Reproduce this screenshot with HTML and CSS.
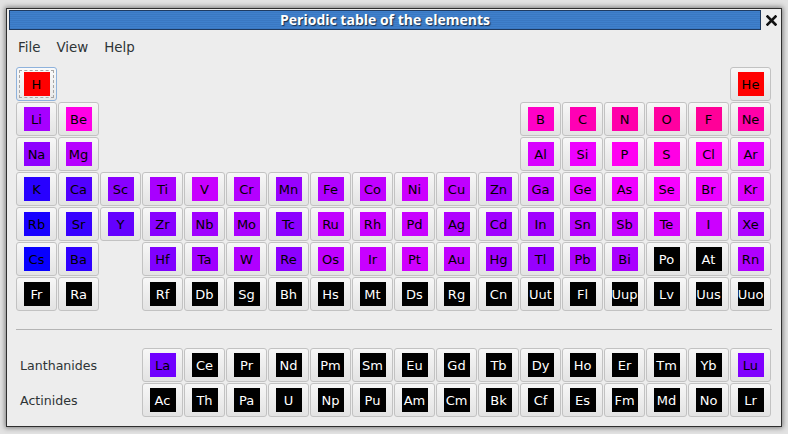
FILE: index.html
```html
<!DOCTYPE html>
<html>
<head>
<meta charset="utf-8">
<link rel="stylesheet" href="styles.css">
</head>
<body>
<div class="window">
  <div class="titlebar">
    <div class="title">Periodic table of the elements</div>
    <div class="close">
      <svg width="11" height="11" viewBox="0 0 11 11"><path d="M1.5 1.5 L9.5 9.5 M9.5 1.5 L1.5 9.5" stroke="#111" stroke-width="2.6" stroke-linecap="square"/></svg>
    </div>
  </div>
  <div class="menubar">
    <span class="menu">File</span>
    <span class="menu">View</span>
    <span class="menu">Help</span>
  </div>
  <div class="table">
    <div class="el focus"><span style="background:#ff0000">H</span></div>
    <div class="skip16"></div>
    <div class="el"><span style="background:#ff0000">He</span></div>

    <div class="el"><span style="background:#a600ff">Li</span></div>
    <div class="el"><span style="background:#ff00e6">Be</span></div>
    <div class="skip10"></div>
    <div class="el"><span style="background:#ff00c8">B</span></div>
    <div class="el"><span style="background:#ff00b4">C</span></div>
    <div class="el"><span style="background:#ff00aa">N</span></div>
    <div class="el"><span style="background:#ff00a0">O</span></div>
    <div class="el"><span style="background:#ff0098">F</span></div>
    <div class="el"><span style="background:#ff00a8">Ne</span></div>

    <div class="el"><span style="background:#8e00ff">Na</span></div>
    <div class="el"><span style="background:#b600ff">Mg</span></div>
    <div class="skip10"></div>
    <div class="el"><span style="background:#d800ff">Al</span></div>
    <div class="el"><span style="background:#ee00ff">Si</span></div>
    <div class="el"><span style="background:#ff00f2">P</span></div>
    <div class="el"><span style="background:#ff00e4">S</span></div>
    <div class="el"><span style="background:#ff00f4">Cl</span></div>
    <div class="el"><span style="background:#e600ff">Ar</span></div>

    <div class="el"><span style="background:#2800ff">K</span></div>
    <div class="el"><span style="background:#5200ff">Ca</span></div>
    <div class="el"><span style="background:#8800ff">Sc</span></div>
    <div class="el"><span style="background:#a800ff">Ti</span></div>
    <div class="el"><span style="background:#c800ff">V</span></div>
    <div class="el"><span style="background:#b400ff">Cr</span></div>
    <div class="el"><span style="background:#9800ff">Mn</span></div>
    <div class="el"><span style="background:#b000ff">Fe</span></div>
    <div class="el"><span style="background:#c000ff">Co</span></div>
    <div class="el"><span style="background:#cc00ff">Ni</span></div>
    <div class="el"><span style="background:#c000ff">Cu</span></div>
    <div class="el"><span style="background:#a400ff">Zn</span></div>
    <div class="el"><span style="background:#c000ff">Ga</span></div>
    <div class="el"><span style="background:#e000ff">Ge</span></div>
    <div class="el"><span style="background:#f000ff">As</span></div>
    <div class="el"><span style="background:#f800ff">Se</span></div>
    <div class="el"><span style="background:#ec00ff">Br</span></div>
    <div class="el"><span style="background:#dc00ff">Kr</span></div>

    <div class="el"><span style="background:#1800ff">Rb</span></div>
    <div class="el"><span style="background:#3800ff">Sr</span></div>
    <div class="el"><span style="background:#6400ff">Y</span></div>
    <div class="el"><span style="background:#8800ff">Zr</span></div>
    <div class="el"><span style="background:#a000ff">Nb</span></div>
    <div class="el"><span style="background:#aa00ff">Mo</span></div>
    <div class="el"><span style="background:#8c00ff">Tc</span></div>
    <div class="el"><span style="background:#c000ff">Ru</span></div>
    <div class="el"><span style="background:#c800ff">Rh</span></div>
    <div class="el"><span style="background:#c800ff">Pd</span></div>
    <div class="el"><span style="background:#b000ff">Ag</span></div>
    <div class="el"><span style="background:#a000ff">Cd</span></div>
    <div class="el"><span style="background:#a000ff">In</span></div>
    <div class="el"><span style="background:#b400ff">Sn</span></div>
    <div class="el"><span style="background:#c400ff">Sb</span></div>
    <div class="el"><span style="background:#d400ff">Te</span></div>
    <div class="el"><span style="background:#cc00ff">I</span></div>
    <div class="el"><span style="background:#ac00ff">Xe</span></div>

    <div class="el"><span style="background:#0800ff">Cs</span></div>
    <div class="el"><span style="background:#3000ff">Ba</span></div>
    <div class="skip1"></div>
    <div class="el"><span style="background:#8000ff">Hf</span></div>
    <div class="el"><span style="background:#a000ff">Ta</span></div>
    <div class="el"><span style="background:#b000ff">W</span></div>
    <div class="el"><span style="background:#8c00ff">Re</span></div>
    <div class="el"><span style="background:#c000ff">Os</span></div>
    <div class="el"><span style="background:#c800ff">Ir</span></div>
    <div class="el"><span style="background:#d000ff">Pt</span></div>
    <div class="el"><span style="background:#c000ff">Au</span></div>
    <div class="el"><span style="background:#a000ff">Hg</span></div>
    <div class="el"><span style="background:#9600ff">Tl</span></div>
    <div class="el"><span style="background:#aa00ff">Pb</span></div>
    <div class="el"><span style="background:#aa00ff">Bi</span></div>
    <div class="el dark"><span>Po</span></div>
    <div class="el dark"><span>At</span></div>
    <div class="el"><span style="background:#b000ff">Rn</span></div>

    <div class="el dark"><span>Fr</span></div>
    <div class="el dark"><span>Ra</span></div>
    <div class="skip1"></div>
    <div class="el dark"><span>Rf</span></div>
    <div class="el dark"><span>Db</span></div>
    <div class="el dark"><span>Sg</span></div>
    <div class="el dark"><span>Bh</span></div>
    <div class="el dark"><span>Hs</span></div>
    <div class="el dark"><span>Mt</span></div>
    <div class="el dark"><span>Ds</span></div>
    <div class="el dark"><span>Rg</span></div>
    <div class="el dark"><span>Cn</span></div>
    <div class="el dark"><span>Uut</span></div>
    <div class="el dark"><span>Fl</span></div>
    <div class="el dark"><span>Uup</span></div>
    <div class="el dark"><span>Lv</span></div>
    <div class="el dark"><span>Uus</span></div>
    <div class="el dark"><span>Uuo</span></div>
  </div>
  <div class="separator"></div>
  <div class="table series">
    <div class="label">Lanthanides</div>
    <div class="el"><span style="background:#7000ff">La</span></div>
    <div class="el dark"><span>Ce</span></div>
    <div class="el dark"><span>Pr</span></div>
    <div class="el dark"><span>Nd</span></div>
    <div class="el dark"><span>Pm</span></div>
    <div class="el dark"><span>Sm</span></div>
    <div class="el dark"><span>Eu</span></div>
    <div class="el dark"><span>Gd</span></div>
    <div class="el dark"><span>Tb</span></div>
    <div class="el dark"><span>Dy</span></div>
    <div class="el dark"><span>Ho</span></div>
    <div class="el dark"><span>Er</span></div>
    <div class="el dark"><span>Tm</span></div>
    <div class="el dark"><span>Yb</span></div>
    <div class="el"><span style="background:#8000ff">Lu</span></div>

    <div class="label">Actinides</div>
    <div class="el dark"><span>Ac</span></div>
    <div class="el dark"><span>Th</span></div>
    <div class="el dark"><span>Pa</span></div>
    <div class="el dark"><span>U</span></div>
    <div class="el dark"><span>Np</span></div>
    <div class="el dark"><span>Pu</span></div>
    <div class="el dark"><span>Am</span></div>
    <div class="el dark"><span>Cm</span></div>
    <div class="el dark"><span>Bk</span></div>
    <div class="el dark"><span>Cf</span></div>
    <div class="el dark"><span>Es</span></div>
    <div class="el dark"><span>Fm</span></div>
    <div class="el dark"><span>Md</span></div>
    <div class="el dark"><span>No</span></div>
    <div class="el dark"><span>Lr</span></div>
  </div>
</div>
</body>
</html>
```
FILE: styles.css
```css
html, body {
  margin: 0;
  padding: 0;
}
body {
  background: #e2e2e2;
  width: 788px;
  height: 434px;
  overflow: hidden;
  font-family: "DejaVu Sans", sans-serif;
}
.window {
  margin: 8px 0 0 6px;
  width: 774px;
  height: 417px;
  border: 1px solid #2f2f2f;
  background: #ededed;
  box-shadow: 0 0 5px 1px rgba(0,0,0,0.45);
}
.titlebar {
  display: flex;
  align-items: center;
  padding: 1px 0 0 2px;
}
.title {
  width: 752px;
  height: 20px;
  box-sizing: border-box;
  border: 1px solid #1e3a60;
  background: repeating-linear-gradient(to bottom, #3f80cc 0px, #3f80cc 1px, #3a78c2 1px, #3a78c2 2px);
  color: #fff;
  font-family: "Open Sans", sans-serif;
  font-weight: bold;
  font-size: 14px;
  line-height: 18px;
  text-align: center;
  text-shadow: 1px 1px 1px #1a2e4a;
}
.close {
  flex: 1;
  display: flex;
  justify-content: center;
  align-items: center;
  height: 20px;
}
.close svg {
  display: block;
}
.menubar {
  display: flex;
  gap: 16px;
  padding: 0 0 0 11px;
  height: 35px;
  align-items: center;
  color: #2e3436;
  font-size: 13.4px;
}
.table {
  display: grid;
  grid-template-columns: repeat(18, 41px);
  grid-auto-rows: 34px;
  column-gap: 1px;
  row-gap: 1px;
  padding-left: 9px;
  margin-top: 2px;
}
.skip16 { grid-column: span 16; }
.skip10 { grid-column: span 10; }
.skip1 { grid-column: span 1; }
.el {
  box-sizing: border-box;
  border: 1px solid #c2c2c2;
  border-radius: 3px;
  background: linear-gradient(to bottom, #f7f7f7, #e3e3e3);
  display: flex;
  align-items: center;
  justify-content: center;
  position: relative;
}
.el span {
  width: 26px;
  height: 24px;
  display: flex;
  align-items: center;
  justify-content: center;
  font-size: 13px;
  color: #000;
  white-space: nowrap;
}
.el.dark span {
  background: #000;
  color: #fff;
}
.el.focus {
  border-color: #8eb2dc;
  background: linear-gradient(to bottom, #fafafa, #e8e8e8);
}
.el.focus::after {
  content: "";
  position: absolute;
  inset: 2px;
  border: 1px dashed #a6a6a6;
}
.separator {
  height: 1px;
  background: #b4b4b4;
  margin: 18px 0 18px 9px;
  width: 756px;
}
.series {
  margin-top: 0;
}
.label {
  grid-column: span 3;
  display: flex;
  align-items: center;
  padding-left: 4px;
  color: #2e3436;
  font-size: 12.6px;
}
```
